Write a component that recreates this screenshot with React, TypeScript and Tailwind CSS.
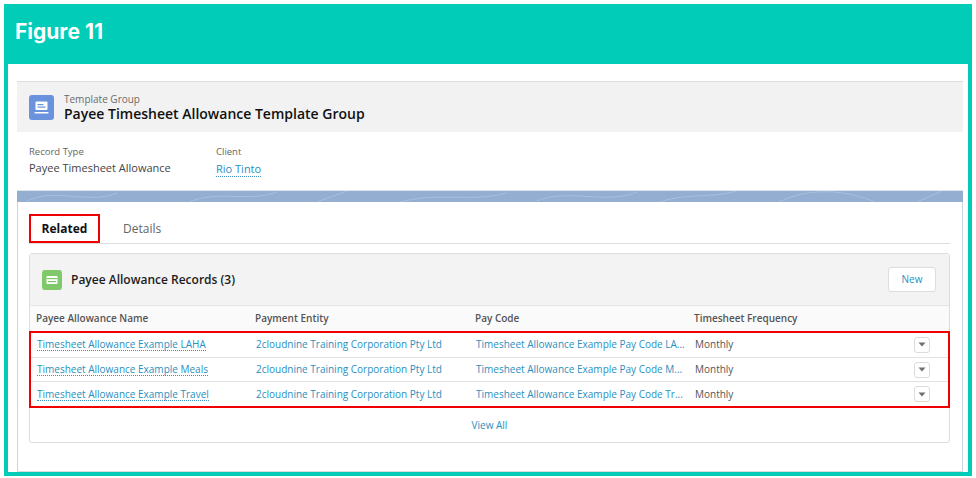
const rows = [
  { name: "Timesheet Allowance Example LAHA", code: "Timesheet Allowance Example Pay Code LA..." },
  { name: "Timesheet Allowance Example Meals", code: "Timesheet Allowance Example Pay Code M..." },
  { name: "Timesheet Allowance Example Travel", code: "Timesheet Allowance Example Pay Code Tr..." },
];

const openSans = "font-['Open_Sans','Liberation_Sans',sans-serif]";

function TemplateIcon() {
  return (
    <div className="flex h-[25px] w-[25px] shrink-0 items-center justify-center rounded-[3px] bg-[#6b92dc]">
      <svg width="17" height="17" viewBox="0 0 17 17" fill="none">
        <rect x="2.5" y="2.5" width="12" height="8.5" rx="1" fill="#fff" />
        <rect x="4.5" y="5" width="6" height="1.2" fill="#6b92dc" />
        <rect x="4.5" y="7.5" width="8" height="1.2" fill="#6b92dc" />
        <rect x="1.5" y="13" width="14" height="1.6" rx="0.6" fill="#fff" />
      </svg>
    </div>
  );
}

function AllowanceIcon() {
  return (
    <div className="flex h-5 w-5 shrink-0 items-center justify-center rounded-[3px] bg-[#7fc96b]">
      <svg width="14" height="14" viewBox="0 0 14 14" fill="none">
        <rect x="1.5" y="3" width="11" height="8" rx="1" fill="#fff" />
        <rect x="1.5" y="5" width="11" height="1.2" fill="#7fc96b" />
        <rect x="3" y="8" width="8" height="1.2" fill="#7fc96b" />
      </svg>
    </div>
  );
}

function Band() {
  return (
    <div className="h-3 shrink-0 overflow-hidden border-t border-[#dfe3ea] bg-[#94aed1]">
      <svg width="946" height="12" viewBox="0 0 946 12" fill="none" stroke="#a9bfdc" strokeWidth="1">
        <path d="M10 10 C40 -4 70 14 100 2 M170 12 C200 -2 230 12 260 1 M300 11 L330 0 M380 12 C420 0 450 12 490 2 M520 10 C550 -3 590 14 620 1 M640 12 C670 1 690 8 720 0 M760 12 C790 -4 830 -2 860 12 M900 11 L925 0" />
      </svg>
    </div>
  );
}

function RowMenu() {
  return (
    <div className="flex h-4 w-4 items-center justify-center rounded-[3px] border border-[#dddbda] bg-white">
      <svg width="8" height="5" viewBox="0 0 8 5">
        <path d="M0.5 0.5 H7.5 L4 4.5 Z" fill="#706e6b" />
      </svg>
    </div>
  );
}

export default function App() {
  return (
    <div className={`h-[478px] w-[976px] bg-white p-1 ${openSans}`}>
      <div className="flex h-[472px] w-[968px] flex-col border-x-4 border-b-4 border-[#00ccb8] bg-white">
        <div className="-mx-1 flex h-[60px] shrink-0 items-center bg-[#00ccb8] pb-[4px] pl-[11px]">
          <span className="font-['Inter',sans-serif] text-[21px] font-bold text-white">Figure 11</span>
        </div>

        <div className="flex flex-1 flex-col pl-[9px] pr-[5px] pt-[17px]">
          <div className="flex h-[51px] shrink-0 items-center gap-[10px] border-t border-[#dcdcdc] bg-[#f2f2f2] pl-3 pt-px">
            <TemplateIcon />
            <div className="flex flex-col">
              <span className="text-[10px] leading-[11px] text-[#6b6b6b]">Template Group</span>
              <span className="text-[14px] font-semibold leading-[17px] text-[#111]">
                Payee Timesheet Allowance Template Group
              </span>
            </div>
          </div>

          <div className="flex h-[58px] shrink-0 pl-3 pt-[13px]">
            <div className="w-[187px]">
              <div className="text-[9.5px] leading-[13px] text-[#666]">Record Type</div>
              <div className="mt-[2px] text-[11px] leading-[15px] text-[#444]">Payee Timesheet Allowance</div>
            </div>
            <div>
              <div className="text-[9.5px] leading-[13px] text-[#666]">Client</div>
              <div className="mt-[3px] border-b border-dotted border-[#3a93c4] text-[11px] leading-[15px] text-[#2a8fc0]">
                Rio Tinto
              </div>
            </div>
          </div>

          <Band />

          <div className="flex flex-1 flex-col border-x border-b border-x-[#ccd4e0] border-b-[#dcdcdc] bg-white pl-[11px] pr-3 pt-3">
            <div className="flex h-[30px] shrink-0 items-stretch border-b border-[#dddddd]">
              <div className="flex w-[71px] items-center justify-center border-2 border-[#f00000] text-[12px] font-bold text-[#111]">
                Related
              </div>
              <div className="ml-[23px] flex items-center text-[12px] text-[#666]">Details</div>
            </div>

            <div className="mt-[9px] flex h-[190px] flex-col rounded-[3px] border border-[#dddddd] bg-white">
              <div className="flex h-[52px] shrink-0 items-center gap-[9px] border-b border-[#e5e5e5] bg-[#f3f3f3] pl-3 pr-[13px]">
                <AllowanceIcon />
                <span className="flex-1 text-[12px] font-semibold text-[#1c1c1c]">Payee Allowance Records (3)</span>
                <div className="flex h-[25px] w-12 items-center justify-center rounded-[3px] border border-[#dddddd] bg-white text-[10px] text-[#2a8fc0]">
                  New
                </div>
              </div>

              <div className="grid h-[25px] shrink-0 grid-cols-[219px_220px_219px_1fr] items-center bg-[#fafafa] pl-[6px] text-[10px] font-semibold text-[#555]">
                <span>Payee Allowance Name</span>
                <span>Payment Entity</span>
                <span>Pay Code</span>
                <span>Timesheet Frequency</span>
              </div>

              <div className="-mx-px flex h-[77px] shrink-0 flex-col border-2 border-[#f00000]">
                {rows.map((r, i) => (
                  <div
                    key={r.name}
                    className={`grid flex-1 grid-cols-[219px_220px_219px_1fr] items-center pl-[6px] text-[10px] ${i < 2 ? "border-b border-[#e3e3e3]" : ""}`}
                  >
                    <span className="justify-self-start border-b border-dotted border-[#3a93c4] leading-[12px] text-[#2a8fc0]">
                      {r.name}
                    </span>
                    <span className="text-[#2a8fc0]">2cloudnine Training Corporation Pty Ltd</span>
                    <span className="whitespace-nowrap text-[#2a8fc0]">{r.code}</span>
                    <div className="flex items-center justify-between pr-[18px]">
                      <span className="text-[#555]">Monthly</span>
                      <RowMenu />
                    </div>
                  </div>
                ))}
              </div>

              <div className="flex flex-1 items-center justify-center text-[10px] text-[#2a8fc0]">View All</div>
            </div>
          </div>
        </div>
      </div>
    </div>
  );
}
